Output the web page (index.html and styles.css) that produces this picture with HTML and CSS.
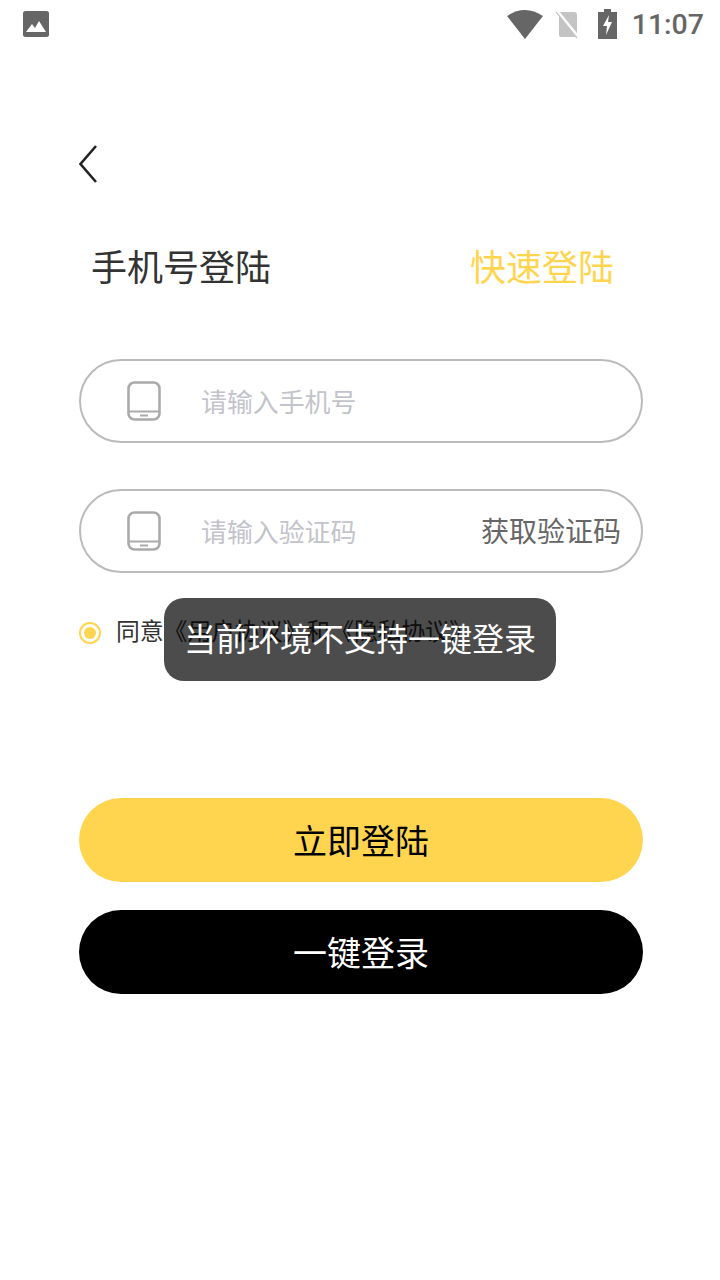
FILE: index.html
```html
<!DOCTYPE html>
<html lang="zh-CN">
<head>
  <meta charset="UTF-8" />
  <meta name="viewport" content="width=device-width, initial-scale=1.0"/>
  <title>手机号登陆</title>
  <link rel="stylesheet" href="styles.css">
</head>
<body>

  <div class="statusbar">
    <svg class="pic-icon" width="26" height="26" viewBox="0 0 26 26">
      <rect width="26" height="26" rx="2.5" fill="#666"/>
      <path d="M3 21 L9 13 L12 17 L16 10 L23 21 Z" fill="#fff"/>
    </svg>
    <div class="status-right">
      <svg width="36" height="29" viewBox="0 0 36 29">
        <path d="M18 29 L0 6 Q18 -6 36 6 Z" fill="#666"/>
      </svg>
      <svg class="sim-icon" width="26" height="30" viewBox="0 0 26 30">
        <path d="M3 3 H18 Q21 3 21 6 V26 Q21 28 18 28 H5 Q3 28 3 26 Z" fill="#c4c4c4"/>
        <path d="M1 2 L23 29" stroke="#fff" stroke-width="3"/>
        <path d="M0 3 L21 29" stroke="#c4c4c4" stroke-width="1.2"/>
      </svg>
      <svg width="20" height="30" viewBox="0 0 20 30">
        <path d="M6 0 H13 V3 H19 V30 H0 V3 H6 Z" fill="#666"/>
        <path d="M11 6 L5 17 H9 L8 26 L14 13 H10 Z" fill="#fff"/>
      </svg>
      <span class="clock">11:07</span>
    </div>
  </div>

  <div class="page">
    <svg class="back" width="20" height="40" viewBox="0 0 20 40">
      <path d="M17 2 L1.5 20 L17 38" fill="none" stroke="#222" stroke-width="2.6"/>
    </svg>

    <div class="tabs">
      <span class="tab">手机号登陆</span>
      <span class="tab tab-quick">快速登陆</span>
    </div>

    <div class="field">
      <svg class="phone-icon" width="34" height="40" viewBox="0 0 34 40">
        <rect x="1.5" y="1.5" width="31" height="37" rx="6" fill="none" stroke="#aaa" stroke-width="2.6"/>
        <path d="M1.5 30.5 H32.5" stroke="#aaa" stroke-width="2"/>
        <path d="M13 34.5 H21" stroke="#aaa" stroke-width="2"/>
      </svg>
      <span class="placeholder">请输入手机号</span>
    </div>

    <div class="field field-code">
      <svg class="phone-icon" width="34" height="40" viewBox="0 0 34 40">
        <rect x="1.5" y="1.5" width="31" height="37" rx="6" fill="none" stroke="#aaa" stroke-width="2.6"/>
        <path d="M1.5 30.5 H32.5" stroke="#aaa" stroke-width="2"/>
        <path d="M13 34.5 H21" stroke="#aaa" stroke-width="2"/>
      </svg>
      <span class="placeholder">请输入验证码</span>
      <span class="get-code">获取验证码</span>
    </div>

    <div class="agree">
      <span class="radio"><span class="radio-dot"></span></span>
      <span>同意《用户协议》和《隐私协议》</span>
    </div>

    <button class="btn btn-login">立即登陆</button>
    <button class="btn btn-onekey">一键登录</button>
  </div>

  <div class="toast">当前环境不支持一键登录</div>

</body>
</html>
```

FILE: styles.css
```css
html, body {
  margin: 0;
  padding: 0;
}
body {
  position: relative;
  width: 720px;
  height: 1280px;
  overflow: hidden;
  background: #fff;
  font-family: "Noto Sans CJK SC", "Noto Sans", sans-serif;
  color: #333;
}
.statusbar {
  height: 48px;
  display: flex;
  justify-content: space-between;
  align-items: center;
  padding: 0 16px 0 23px;
}
.status-right {
  display: flex;
  align-items: center;
  gap: 13px;
}
.sim-icon {
  margin-right: 3px;
}
.clock {
  font-family: Roboto, sans-serif;
  font-size: 28.5px;
  font-weight: 500;
  color: #666;
  margin-left: 1px;
}
.page {
  padding: 96px 77px 0 79px;
  display: flex;
  flex-direction: column;
}
.back {
  display: block;
  margin-bottom: 55px;
}
.tabs {
  display: flex;
  justify-content: space-between;
  padding: 0 29px 0 12px;
  margin-bottom: 68px;
}
.tab {
  font-size: 36px;
  line-height: 52px;
  color: #333;
}
.tab-quick {
  color: #ffd54f;
}
.field {
  height: 80px;
  border: 2px solid #bbb;
  border-radius: 42px;
  display: flex;
  align-items: center;
  padding: 0 20px 0 46px;
  margin-bottom: 46px;
}
.phone-icon {
  margin-right: 40px;
}
.placeholder {
  font-size: 25.9px;
  line-height: 36px;
  color: #c3c3cb;
}
.get-code {
  margin-left: auto;
  font-size: 28px;
  line-height: 36px;
  margin-bottom: 2px;
  color: #666;
}
.agree {
  display: flex;
  align-items: center;
  gap: 15px;
  height: 36px;
  margin-top: -8px;
  font-size: 23.8px;
  color: #333;
}
.radio {
  width: 22px;
  height: 22px;
  margin-top: 8px;
  box-sizing: border-box;
  border: 2px solid #ffd54f;
  border-radius: 50%;
  display: flex;
  align-items: center;
  justify-content: center;
}
.radio-dot {
  width: 12px;
  height: 12px;
  border-radius: 50%;
  background: #ffd54f;
}
.btn {
  display: block;
  width: 564px;
  height: 84px;
  border: none;
  border-radius: 42px;
  font-family: inherit;
  font-size: 34px;
  padding: 0 0 2px;
}
.btn-login {
  margin-top: 151px;
  background: #ffd54f;
  color: #000;
}
.btn-onekey {
  margin-top: 28px;
  background: #000;
  color: #fff;
}
.toast {
  position: absolute;
  left: 164px;
  top: 598px;
  width: 392px;
  height: 83px;
  padding-bottom: 6px;
  box-sizing: border-box;
  border-radius: 20px;
  background: rgba(0, 0, 0, 0.7);
  color: #fff;
  font-size: 32px;
  display: flex;
  align-items: center;
  justify-content: center;
}
```
